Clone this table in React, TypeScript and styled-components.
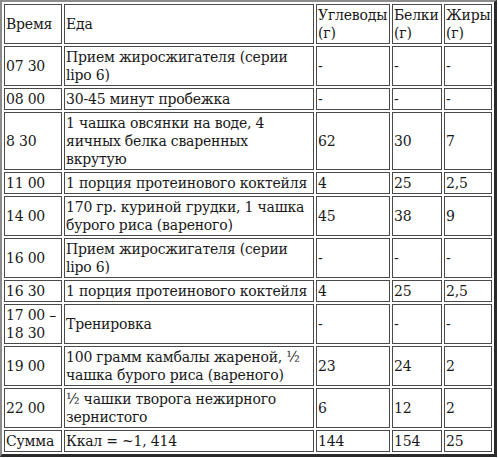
import styled, { createGlobalStyle } from "styled-components";

const GlobalStyle = createGlobalStyle`
  html, body {
    margin: 0;
    padding: 0;
    background: #ffffff;
  }
`;

const Table = styled.table`
  table-layout: fixed;
  width: 497px;
  border-collapse: separate;
  border-spacing: 2px;
  border-style: solid;
  border-width: 2px 3px 3px 2px;
  border-color: #8c8c8c #2b2b2b #2b2b2b #8c8c8c;
  font-family: "DejaVu Serif", "Liberation Serif", serif;
  font-size: 14px;
  letter-spacing: -0.2px;
  line-height: 18px;
  color: #1a1a1a;
`;

const Cell = styled.td<{ $w?: number }>`
  box-sizing: border-box;
  width: ${({ $w }) => ($w ? `${$w}px` : "auto")};
  border: 1px solid #4a4a4a;
  padding: 1px;
  vertical-align: middle;
  text-align: left;
  overflow: hidden;
`;

type Row = [string, string, string, string, string];

const header: Row = ["Время", "Еда", "Углеводы (г)", "Белки (г)", "Жиры (г)"];

const rows: Row[] = [
  ["07 30", "Прием жиросжигателя (серии lipo 6)", "-", "-", "-"],
  ["08 00", "30-45 минут пробежка", "-", "-", "-"],
  ["8 30", "1 чашка овсянки на воде, 4 яичных белка сваренных вкрутую", "62", "30", "7"],
  ["11 00", "1 порция протеинового коктейля", "4", "25", "2,5"],
  ["14 00", "170 гр. куриной грудки, 1 чашка бурого риса (вареного)", "45", "38", "9"],
  ["16 00", "Прием жиросжигателя (серии lipo 6)", "-", "-", "-"],
  ["16 30", "1 порция протеинового коктейля", "4", "25", "2,5"],
  ["17 00 – 18 30", "Тренировка", "-", "-", "-"],
  ["19 00", "100 грамм камбалы жареной, ½ чашка бурого риса (вареного)", "23", "24", "2"],
  ["22 00", "½ чашки творога нежирного зернистого", "6", "12", "2"],
  ["Сумма", "Ккал = ~1, 414", "144", "154", "25"],
];

const widths = [58, 250, 74, 50, 48];

export default function App() {
  return (
    <>
      <GlobalStyle />
      <Table>
        <tbody>
          <tr>
            {header.map((c, j) => (
              <Cell key={j} $w={widths[j]}>
                {c}
              </Cell>
            ))}
          </tr>
          {rows.map((r, i) => (
            <tr key={i}>
              {r.map((c, j) => (
                <Cell key={j}>{c}</Cell>
              ))}
            </tr>
          ))}
        </tbody>
      </Table>
    </>
  );
}
